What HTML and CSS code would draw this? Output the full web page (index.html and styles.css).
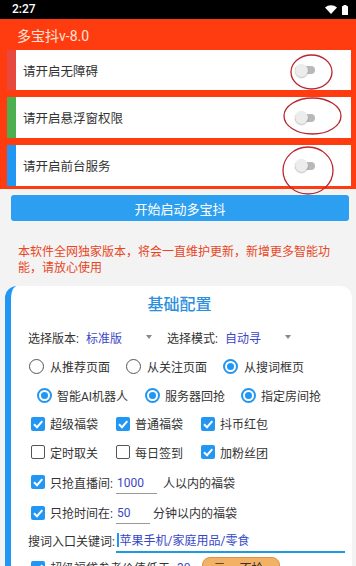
FILE: index.html
```html
<!DOCTYPE html>
<html lang="zh">
<head>
<meta charset="utf-8">
<title>多宝抖</title>
<link rel="stylesheet" href="styles.css">
</head>
<body>
<div class="status">
  <span class="time">2:27</span>
  <span class="sicons">
    <svg width="12" height="9" viewBox="0 0 12 9"><path d="M6 9 L0 2.6 A8.6 8.6 0 0 1 12 2.6 Z" fill="#fff"/></svg>
    <svg width="6" height="10" viewBox="0 0 6 10"><rect x="1.5" y="0" width="3" height="1.2" fill="#fff"/><rect x="0" y="1" width="6" height="9" rx="0.6" fill="#fff"/></svg>
  </span>
</div>
<div class="header">
  <div class="title">多宝抖v-8.0</div>
  <div class="perm h40"><i class="stripe s-red"></i><span class="plabel">请开启无障碍</span><span class="switch"><i></i></span></div>
  <div class="perm h41"><i class="stripe s-green"></i><span class="plabel">请开启悬浮窗权限</span><span class="switch"><i></i></span></div>
  <div class="perm h41"><i class="stripe s-blue"></i><span class="plabel">请开启前台服务</span><span class="switch"><i></i></span></div>
</div>
<button class="start">开始启动多宝抖</button>
<p class="notice">本软件全网独家版本，将会一直维护更新，新增更多智能功能，请放心使用</p>
<section class="config">
  <h2>基础配置</h2>
  <div class="row h30">
    <span class="sel"><span class="lbl">选择版本:</span><span class="val">标准版</span><i class="arrow"></i></span>
    <span class="sel sel2"><span class="lbl">选择模式:</span><span class="val">自动寻</span><i class="arrow"></i></span>
  </div>
  <div class="row h29 pl1">
    <span class="opt w97"><i class="rd"></i>从推荐页面</span>
    <span class="opt w97"><i class="rd"></i>从关注页面</span>
    <span class="opt"><i class="rd on"></i>从搜词框页</span>
  </div>
  <div class="row h28 pl9">
    <span class="opt w108"><i class="rd on"></i>智能AI机器人</span>
    <span class="opt w96"><i class="rd on"></i>服务器回抢</span>
    <span class="opt"><i class="rd on"></i>指定房间抢</span>
  </div>
  <div class="row h29 pl3">
    <span class="opt w85"><i class="cb on"><svg viewBox="0 0 14 14"><path d="M3 7.3 L6 10.2 L11.3 4.2"/></svg></i>超级福袋</span>
    <span class="opt w85"><i class="cb on"><svg viewBox="0 0 14 14"><path d="M3 7.3 L6 10.2 L11.3 4.2"/></svg></i>普通福袋</span>
    <span class="opt"><i class="cb on"><svg viewBox="0 0 14 14"><path d="M3 7.3 L6 10.2 L11.3 4.2"/></svg></i>抖币红包</span>
  </div>
  <div class="row h28 pl3">
    <span class="opt w85"><i class="cb"></i>定时取关</span>
    <span class="opt w85"><i class="cb"></i>每日签到</span>
    <span class="opt"><i class="cb on"><svg viewBox="0 0 14 14"><path d="M3 7.3 L6 10.2 L11.3 4.2"/></svg></i>加粉丝团</span>
  </div>
  <div class="row h32 pl3">
    <i class="cb on"><svg viewBox="0 0 14 14"><path d="M3 7.3 L6 10.2 L11.3 4.2"/></svg></i>
    <span class="flbl">只抢直播间:</span><span class="inp w41">1000</span><span class="suf">人以内的福袋</span>
  </div>
  <div class="row h29 pl3">
    <i class="cb on"><svg viewBox="0 0 14 14"><path d="M3 7.3 L6 10.2 L11.3 4.2"/></svg></i>
    <span class="flbl">只抢时间在:</span><span class="inp w34">50</span><span class="suf s3">分钟以内的福袋</span>
  </div>
  <div class="row h27">
    <span class="klbl">搜词入口关键词:</span><span class="kinp">苹果手机/家庭用品/零食</span>
  </div>
  <div class="row h27 pl3">
    <i class="cb on"><svg viewBox="0 0 14 14"><path d="M3 7.3 L6 10.2 L11.3 4.2"/></svg></i>
    <span class="vlbl">超级福袋参考价值低于:</span><span class="vnum">30</span><span class="pill"><span>元</span><span>不抢</span></span><span class="more">▾</span>
  </div>
</section>
<svg class="marks" width="356" height="566" viewBox="0 0 356 566">
  <ellipse cx="311.5" cy="72" rx="20.5" ry="17" />
  <ellipse cx="312.5" cy="116" rx="28.5" ry="18" />
  <ellipse cx="308" cy="170.5" rx="25" ry="23.5" />
</svg>
</body>
</html>
```

FILE: styles.css
```css
html, body {
  margin: 0;
  padding: 0;
}
body {
  width: 356px;
  height: 566px;
  overflow: hidden;
  position: relative;
  background: #f3f3f3;
  font-family: Roboto, "Noto Sans CJK SC", sans-serif;
  color: #333;
}
.status {
  height: 19px;
  background: #000;
  display: flex;
  align-items: center;
  justify-content: space-between;
  padding: 0 8px 0 12px;
}
.time {
  color: #fff;
  font-size: 12px;
  font-weight: 500;
  line-height: 19px;
}
.sicons {
  display: flex;
  align-items: center;
  gap: 5px;
}
.sicons svg { display: block; }

.header {
  background: #ff3c10;
  padding: 7px 5px 3px 7px;
  display: flex;
  flex-direction: column;
  gap: 7px;
}
.title {
  font-size: 14px;
  line-height: 20px;
  color: #ffe3d9;
  padding-left: 10px;
  margin-bottom: -3px;
}
.perm {
  display: flex;
  align-items: center;
  background: #fff;
}
.h40 { height: 40px; }
.h41 { height: 41px; }
.stripe {
  width: 9px;
  align-self: stretch;
}
.s-red { background: #e8493e; }
.s-green { background: #4caf50; }
.s-blue { background: #2196f3; }
.plabel {
  flex: 1;
  margin-left: 7px;
  font-size: 12.5px;
  color: #333;
}
.switch {
  width: 20px;
  height: 8px;
  border-radius: 4px;
  background: #b8b8b8;
  display: flex;
  align-items: center;
  margin-right: 36px;
}
.switch i {
  flex: none;
  width: 13px;
  height: 13px;
  border-radius: 50%;
  background: #ececec;
  box-shadow: 0 1px 1.5px rgba(0,0,0,0.25);
}

.start {
  display: block;
  margin: 6px 7px 0 11px;
  width: 338px;
  height: 26px;
  border: 0;
  border-radius: 3px;
  background: #2c9ff0;
  color: #fff;
  font-family: Roboto, "Noto Sans CJK SC", sans-serif;
  font-size: 13px;
  padding: 0;
}
.notice {
  margin: 23px 0 0 18px;
  width: 318px;
  font-size: 12px;
  line-height: 16px;
  color: #e8461e;
}

.config {
  margin: 10px 4px 0 5px;
  background: #fff;
  border-left: 6px solid #2196f3;
  border-radius: 12px 12px 0 0;
  padding: 8px 0 0 17px;
}
.config h2 {
  margin: 0 0 6px -21px;
  font-size: 16px;
  line-height: 22px;
  color: #2b8fdc;
  text-align: center;
  font-weight: 500;
}
.row {
  display: flex;
  align-items: center;
  font-size: 12px;
  white-space: nowrap;
}
.h27 { height: 27px; }
.h28 { height: 28px; }
.h29 { height: 29px; }
.h30 { height: 30px; }
.h32 { height: 32px; }
.pl1 { padding-left: 1px; }
.pl3 { padding-left: 3px; }
.pl9 { padding-left: 9px; }

.sel {
  display: flex;
  align-items: center;
}
.sel2 { margin-left: 15px; }
.lbl { width: 58px; }
.val {
  width: 60px;
  color: #3b47c4;
}
.arrow {
  width: 0;
  height: 0;
  border-left: 3.5px solid transparent;
  border-right: 3.5px solid transparent;
  border-top: 4px solid #888;
}

.opt {
  display: flex;
  align-items: center;
}
.w85 { width: 85px; }
.w96 { width: 96px; }
.w97 { width: 97px; }
.w108 { width: 108px; }

.rd {
  flex: none;
  box-sizing: border-box;
  width: 15px;
  height: 15px;
  border-radius: 50%;
  border: 1.5px solid #555;
  margin-right: 6px;
  display: grid;
  place-items: center;
}
.pl9 .rd { margin-right: 5px; }
.rd.on {
  border: 2px solid #2196f3;
}
.rd.on::after {
  content: "";
  width: 7px;
  height: 7px;
  border-radius: 50%;
  background: #2196f3;
}

.cb {
  flex: none;
  box-sizing: border-box;
  width: 14px;
  height: 14px;
  border-radius: 2px;
  border: 1.6px solid #555;
  background: #fff;
  margin-right: 5px;
  display: block;
}
.cb.on {
  border: 0;
  background: #2196f3;
}
.cb svg {
  display: block;
  width: 14px;
  height: 14px;
}
.cb svg path {
  fill: none;
  stroke: #fff;
  stroke-width: 2;
}

.flbl { width: 66px; }
.inp {
  display: block;
  line-height: 16px;
  padding: 0 0 2px 1px;
  margin-top: 4px;
  border-bottom: 1px solid #999;
  color: #3b47c4;
  box-sizing: border-box;
}
.w41 { width: 41px; }
.w34 { width: 34px; }
.suf { margin-left: 6px; }
.suf.s3 { margin-left: 3px; }

.klbl { width: 88px; }
.kinp {
  display: block;
  width: 229px;
  box-sizing: border-box;
  line-height: 16px;
  padding: 0 0 2px 1px;
  margin-top: 4px;
  border-bottom: 2px solid #1e9be0;
  color: #3347c8;
}
.kinp::before {
  content: "";
  display: inline-block;
  width: 1.5px;
  height: 14px;
  background: #2196f3;
  vertical-align: -2px;
  margin-right: 1px;
}

.vlbl { }
.vnum {
  margin-left: 4px;
  color: #3b47c4;
}
.pill {
  display: flex;
  gap: 14px;
  margin-left: 12px;
  padding: 0 16px 0 10px;
  height: 20px;
  align-items: center;
  border-radius: 8px;
  background: #f2b164;
  border: 1px solid #d8924a;
}
.more {
  margin-left: 14px;
  color: #999;
}

.marks {
  position: absolute;
  top: 0;
  left: 0;
  pointer-events: none;
}
.marks ellipse {
  fill: none;
  stroke: #b9262c;
  stroke-width: 1.3;
}
```
